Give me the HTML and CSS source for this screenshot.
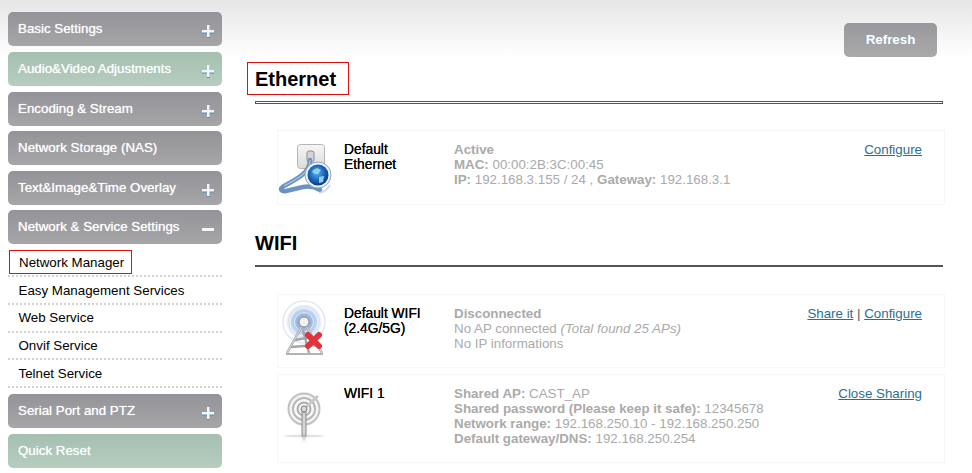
FILE: index.html
```html
<!DOCTYPE html>
<html lang="en">
  <head>
    <meta charset="UTF-8" />
    <title>Network Manager</title>
    <link rel="stylesheet" href="styles.css">
  </head>
  <body>
    <div class="page">
      <div class="sidebar">
        <div class="menu-head">Basic Settings<span class="sign"></span></div>
        <div class="menu-head green">Audio&amp;Video Adjustments<span class="sign"></span></div>
        <div class="menu-head">Encoding &amp; Stream<span class="sign"></span></div>
        <div class="menu-head">Network Storage (NAS)</div>
        <div class="menu-head">Text&amp;Image&amp;Time Overlay<span class="sign"></span></div>
        <div class="menu-head open">Network &amp; Service Settings<span class="sign minus"></span></div>
        <ul class="submenu">
          <li class="active"><a class="current">Network Manager</a></li>
          <li><a>Easy Management Services</a></li>
          <li><a>Web Service</a></li>
          <li><a>Onvif Service</a></li>
          <li><a>Telnet Service</a></li>
        </ul>
        <div class="menu-head">Serial Port and PTZ<span class="sign"></span></div>
        <div class="menu-head green">Quick Reset</div>
      </div>

      <div class="main">
        <div class="toolbar">
          <button type="button" class="refresh">Refresh</button>
        </div>

        <div class="section-title first"><h2 class="marked">Ethernet</h2></div>
        <div class="rule double"></div>

        <div class="row row-ethernet">
          <div class="icon">
            <svg width="56" height="58" viewBox="0 0 56 58">
              <defs>
                <radialGradient id="globe" cx="0.45" cy="0.4" r="0.6">
                  <stop offset="0" stop-color="#5fb0ea" />
                  <stop offset="0.6" stop-color="#1a66b8" />
                  <stop offset="1" stop-color="#0b3a82" />
                </radialGradient>
                <linearGradient id="plate" x1="0" y1="0" x2="0" y2="1">
                  <stop offset="0" stop-color="#f6f6f6" />
                  <stop offset="1" stop-color="#dcdcdc" />
                </linearGradient>
              </defs>
              <rect x="18.5" y="2.5" width="27" height="24" rx="3" fill="url(#plate)" stroke="#b5b5b5" />
              <rect x="28" y="9" width="7" height="11" rx="2" fill="#d4d4d4" stroke="#8d8d8d" />
              <path d="M31 18 C31 30 20 36 5 44 C0 47 2 50 7 49 L24 45 C30 44 36 45 41 48" fill="none" stroke="#6a93c4" stroke-width="4.5" stroke-linecap="round" />
              <path d="M31 18 C31 30 20 36 5 44" fill="none" stroke="#a9c5e2" stroke-width="1.2" />
              <path d="M40 51 Q47 50 51 43" fill="none" stroke="#cfdcec" stroke-width="2" />
              <circle cx="39" cy="33" r="13" fill="#eef3fa" stroke="#8ea2c2" />
              <circle cx="39" cy="33" r="10.5" fill="url(#globe)" />
              <path d="M33 29 L38 26 L42 28 L39 32 L35 32 Z M40 35 L45 34 L44 40 L40 41 Z" fill="#8fd0f2" />
            </svg>
          </div>
          <div class="name">Default<br>Ethernet</div>
          <div class="info">
            <b>Active</b><br>
            <b>MAC:</b> 00:00:2B:3C:00:45<br>
            <b>IP:</b> 192.168.3.155 / 24 , <b>Gateway:</b> 192.168.3.1
          </div>
          <div class="actions"><a>Configure</a></div>
        </div>

        <div class="section-title"><h2>WIFI</h2></div>
        <div class="rule"></div>

        <div class="row row-wifi">
          <div class="icon">
            <svg width="56" height="58" viewBox="0 0 56 58">
              <defs>
                <radialGradient id="waves">
                  <stop offset="0" stop-color="#6f97d2" />
                  <stop offset="0.45" stop-color="#a0bce4" />
                  <stop offset="1" stop-color="#eef3fa" />
                </radialGradient>
              </defs>
              <circle cx="25" cy="16" r="21" fill="#fff" stroke="#e2e9f3" stroke-width="1.5" />
              <circle cx="25" cy="16" r="17.5" fill="url(#waves)" />
              <circle cx="25" cy="16" r="14" fill="none" stroke="#fff" stroke-opacity="0.7" />
              <circle cx="25" cy="16" r="9.5" fill="none" stroke="#fff" stroke-opacity="0.6" />
              <path d="M23 20 L8 47 M27 20 L43 47 M24 24 L30 47 M16 34 L33 31 M12 41 L38 39" fill="none" stroke="#a5a5a5" stroke-width="2.4" />
              <path d="M23 20 L8 47 M27 20 L43 47" fill="none" stroke="#eeeeee" stroke-width="0.8" />
              <path d="M7 48 L44 48" stroke="#9a9a9a" stroke-width="1.6" />
              <circle cx="25" cy="16" r="5" fill="#f2f2f2" stroke="#8f8f8f" />
              <path d="M29 29 L40 40 M40 29 L29 40" stroke="#e0333b" stroke-width="6" stroke-linecap="round" />
            </svg>
          </div>
          <div class="name">Default WIFI<br>(2.4G/5G)</div>
          <div class="info">
            <b>Disconnected</b><br>
            No AP connected <i>(Total found 25 APs)</i><br>
            No IP informations
          </div>
          <div class="actions"><a>Share it</a> | <a>Configure</a></div>
        </div>

        <div class="row row-wifi-ap">
          <div class="icon">
            <svg width="56" height="58" viewBox="0 0 56 58">
              <defs>
                <linearGradient id="fade" x1="0" y1="0" x2="0" y2="1">
                  <stop offset="0" stop-color="#d8d8d8" />
                  <stop offset="1" stop-color="#ffffff" />
                </linearGradient>
              </defs>
              <circle cx="25" cy="23" r="15.5" fill="#f4f4f4" stroke="#c0c0c0" stroke-width="2" />
              <circle cx="25" cy="23" r="11" fill="#fafafa" stroke="#b8b8b8" stroke-width="2" />
              <circle cx="25" cy="23" r="6.5" fill="#f2f2f2" stroke="#adadad" stroke-width="2" />
              <path d="M27 21 L39 10" stroke="#c8c8c8" stroke-width="3" />
              <ellipse cx="25" cy="50" rx="20" ry="1.5" fill="#e2e2e2" />
              <rect x="23" y="26" width="4" height="24" fill="#d4d4d4" stroke="#8d8d8d" />
              <circle cx="25" cy="23" r="3" fill="#d8d8d8" stroke="#808080" />
              <rect x="23" y="51" width="4" height="6" fill="url(#fade)" />
            </svg>
          </div>
          <div class="name">WIFI 1</div>
          <div class="info">
            <b>Shared AP:</b> CAST_AP<br>
            <b>Shared password (Please keep it safe):</b> 12345678<br>
            <b>Network range:</b> 192.168.250.10 - 192.168.250.250<br>
            <b>Default gateway/DNS:</b> 192.168.250.254
          </div>
          <div class="actions"><a>Close Sharing</a></div>
        </div>
      </div>
    </div>
  </body>
</html>
```

FILE: styles.css
```css
html,
body {
  height: 100%;
  overflow: hidden;
}

body {
  margin: 0;
  font-family: "Liberation Sans", Arial, sans-serif;
  font-size: 13.33px;
  color: #000;
  background: linear-gradient(#e6e6e6, #ffffff 58px) no-repeat;
}

.page {
  display: flex;
  align-items: flex-start;
  padding: 12.45px 0 0 8px;
}

.sidebar {
  width: 214px;
  flex: none;
}

.menu-head {
  position: relative;
  height: 34px;
  margin-bottom: 5.55px;
  padding: 9px 0 0 10px;
  box-sizing: border-box;
  border-radius: 5px;
  background: linear-gradient(#939399, #a6a6a8);
  color: #fff;
  line-height: 16px;
  text-shadow: 0 0 1px rgba(255, 255, 255, 0.8);
}

.menu-head.green {
  background: linear-gradient(#a4bfaf, #b6cdc0);
}

.menu-head.open {
  margin-bottom: 0;
}

.sign {
  position: absolute;
  right: 8px;
  top: 13px;
  width: 12px;
  height: 12px;
  background:
    linear-gradient(#f2f6f9, #f2f6f9) 0 5px / 12px 2.5px no-repeat,
    linear-gradient(#f2f6f9, #f2f6f9) 4.5px 0 / 2.5px 12px no-repeat;
  filter: drop-shadow(0 1px 0 #4d8fb5);
}

.sign.minus {
  background: linear-gradient(#f2f6f9, #f2f6f9) 0 5px / 12px 3px no-repeat;
  filter: drop-shadow(0 1px 0 #7fa6bd);
}

.submenu {
  list-style: none;
  margin: 0 0 6.2px;
  padding: 0;
}

.submenu li {
  height: 27.7px;
  box-sizing: border-box;
  padding: 5.5px 0 0 0;
  border-bottom: 2px dotted #d2d2d2;
  line-height: 16px;
  white-space: nowrap;
}

.submenu li.active {
  height: 33px;
  padding: 6px 0 0 1px;
}

.submenu li a {
  display: inline-block;
  padding: 0 10.5px;
  color: #000;
}

.submenu li a.current {
  width: 123px;
  height: 24px;
  box-sizing: border-box;
  padding: 4px 9px;
  border: 1px solid #e01010;
}

.main {
  width: 688px;
  margin-left: 33px;
  flex: none;
}

.toolbar {
  display: flex;
  justify-content: flex-end;
  padding: 10.55px 6px 0 0;
}

.refresh {
  width: 93px;
  height: 34px;
  padding: 0 0 1px;
  border: none;
  border-radius: 5px;
  background: linear-gradient(#98989d, #aaaaaa);
  color: #fff;
  font-family: "Liberation Sans", Arial, sans-serif;
  font-size: 13.33px;
  font-weight: bold;
  text-shadow: 0 0 1px rgba(120, 180, 220, 0.8);
}

.section-title.first {
  margin-top: 5px;
  height: 39px;
}

.section-title {
  height: 39px;
  margin-top: 21px;
}

h2 {
  display: inline-block;
  margin: 0;
  font-size: 20px;
  line-height: 35px;
}

h2.marked {
  margin-left: -8px;
  padding: 2px 12px 0 7px;
  border: 1px solid #e01010;
  line-height: 29px;
}

.rule {
  height: 2px;
  background: #555;
}

.rule.double {
  height: 3px;
  box-sizing: border-box;
  background: #fff;
  border: 1px solid #555;
}

.row {
  display: grid;
  grid-template-columns: 65px 110px 1fr auto;
  width: 668px;
  box-sizing: border-box;
  margin-left: 22px;
  padding: 11px 22px 16px 1px;
  border: 1px solid #f6f6f6;
  line-height: 15px;
}

.row-ethernet {
  margin-top: 26px;
  padding-bottom: 17px;
}

.row-wifi {
  margin-top: 27px;
}

.row-wifi-ap {
  margin-top: 6px;
}

.icon {
  height: 15px;
}

.icon svg {
  display: block;
  overflow: visible;
}

.name {
  font-size: 13.8px;
  text-shadow: 0 0 0.5px #000;
}

.info {
  color: #aaaaaa;
}

.actions {
  color: #555;
}

.actions a {
  color: #2a6f93;
  text-decoration: underline;
}
```
